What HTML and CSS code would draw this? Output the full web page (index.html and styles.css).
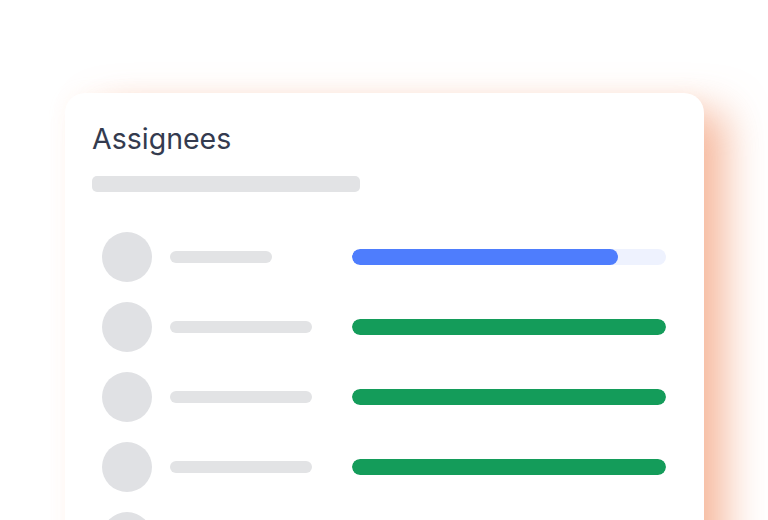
FILE: index.html
```html
<!DOCTYPE html>
<html>
<head>
<meta charset="utf-8">
<link rel="stylesheet" href="styles.css">
</head>
<body>
<div class="stage">
  <div class="card">
    <h1 class="title">Assignees</h1>
    <div class="subtitle-bar"></div>
    <div class="rows">
      <div class="row">
        <div class="avatar"></div>
        <div class="name short"></div>
        <div class="track blue"><div class="fill" style="width:84.7%"></div></div>
      </div>
      <div class="row">
        <div class="avatar"></div>
        <div class="name"></div>
        <div class="track green"><div class="fill" style="width:100%"></div></div>
      </div>
      <div class="row">
        <div class="avatar"></div>
        <div class="name"></div>
        <div class="track green"><div class="fill" style="width:100%"></div></div>
      </div>
      <div class="row">
        <div class="avatar"></div>
        <div class="name"></div>
        <div class="track green"><div class="fill" style="width:100%"></div></div>
      </div>
      <div class="row">
        <div class="avatar"></div>
        <div class="name"></div>
        <div class="track green"><div class="fill" style="width:100%"></div></div>
      </div>
    </div>
  </div>
</div>
</body>
</html>
```
FILE: styles.css
```css
html, body {
  margin: 0;
  padding: 0;
  background: #ffffff;
  overflow: hidden;
  height: 520px;
}
.stage {
  padding: 93px 0 0 65px;
}
.card {
  width: 639px;
  height: 600px;
  box-sizing: border-box;
  background: #ffffff;
  border-radius: 20px;
  padding: 26px 38px 0 27px;
  box-shadow: 28px 12px 40px -6px rgba(240, 140, 95, 0.6), 0 0 18px rgba(255, 210, 185, 0.14);
}
.title {
  margin: 0;
  font-family: Inter, "Liberation Sans", sans-serif;
  font-weight: 400;
  font-size: 28.5px;
  line-height: 40px;
  color: #343b4f;
  letter-spacing: 0;
}
.subtitle-bar {
  margin-top: 17px;
  width: 268px;
  height: 16px;
  border-radius: 5px;
  background: #e2e3e5;
}
.rows {
  margin-top: 40px;
  display: flex;
  flex-direction: column;
  gap: 20px;
  padding-left: 10px;
}
.row {
  display: flex;
  align-items: center;
  height: 50px;
}
.avatar {
  width: 50px;
  height: 50px;
  border-radius: 50%;
  background: #e0e1e4;
  flex: none;
}
.name {
  margin-left: 18px;
  width: 142px;
  height: 12px;
  border-radius: 6px;
  background: #e2e3e5;
  flex: none;
}
.name.short {
  width: 102px;
}
.track {
  margin-left: auto;
  width: 314px;
  height: 16px;
  border-radius: 8px;
  overflow: hidden;
  flex: none;
}
.track.blue { background: #eef2fe; }
.track.green { background: #e6f4ec; }
.fill {
  height: 100%;
  border-radius: 8px;
}
.blue .fill { background: #4e7dfd; }
.green .fill { background: #149c5a; }
```
